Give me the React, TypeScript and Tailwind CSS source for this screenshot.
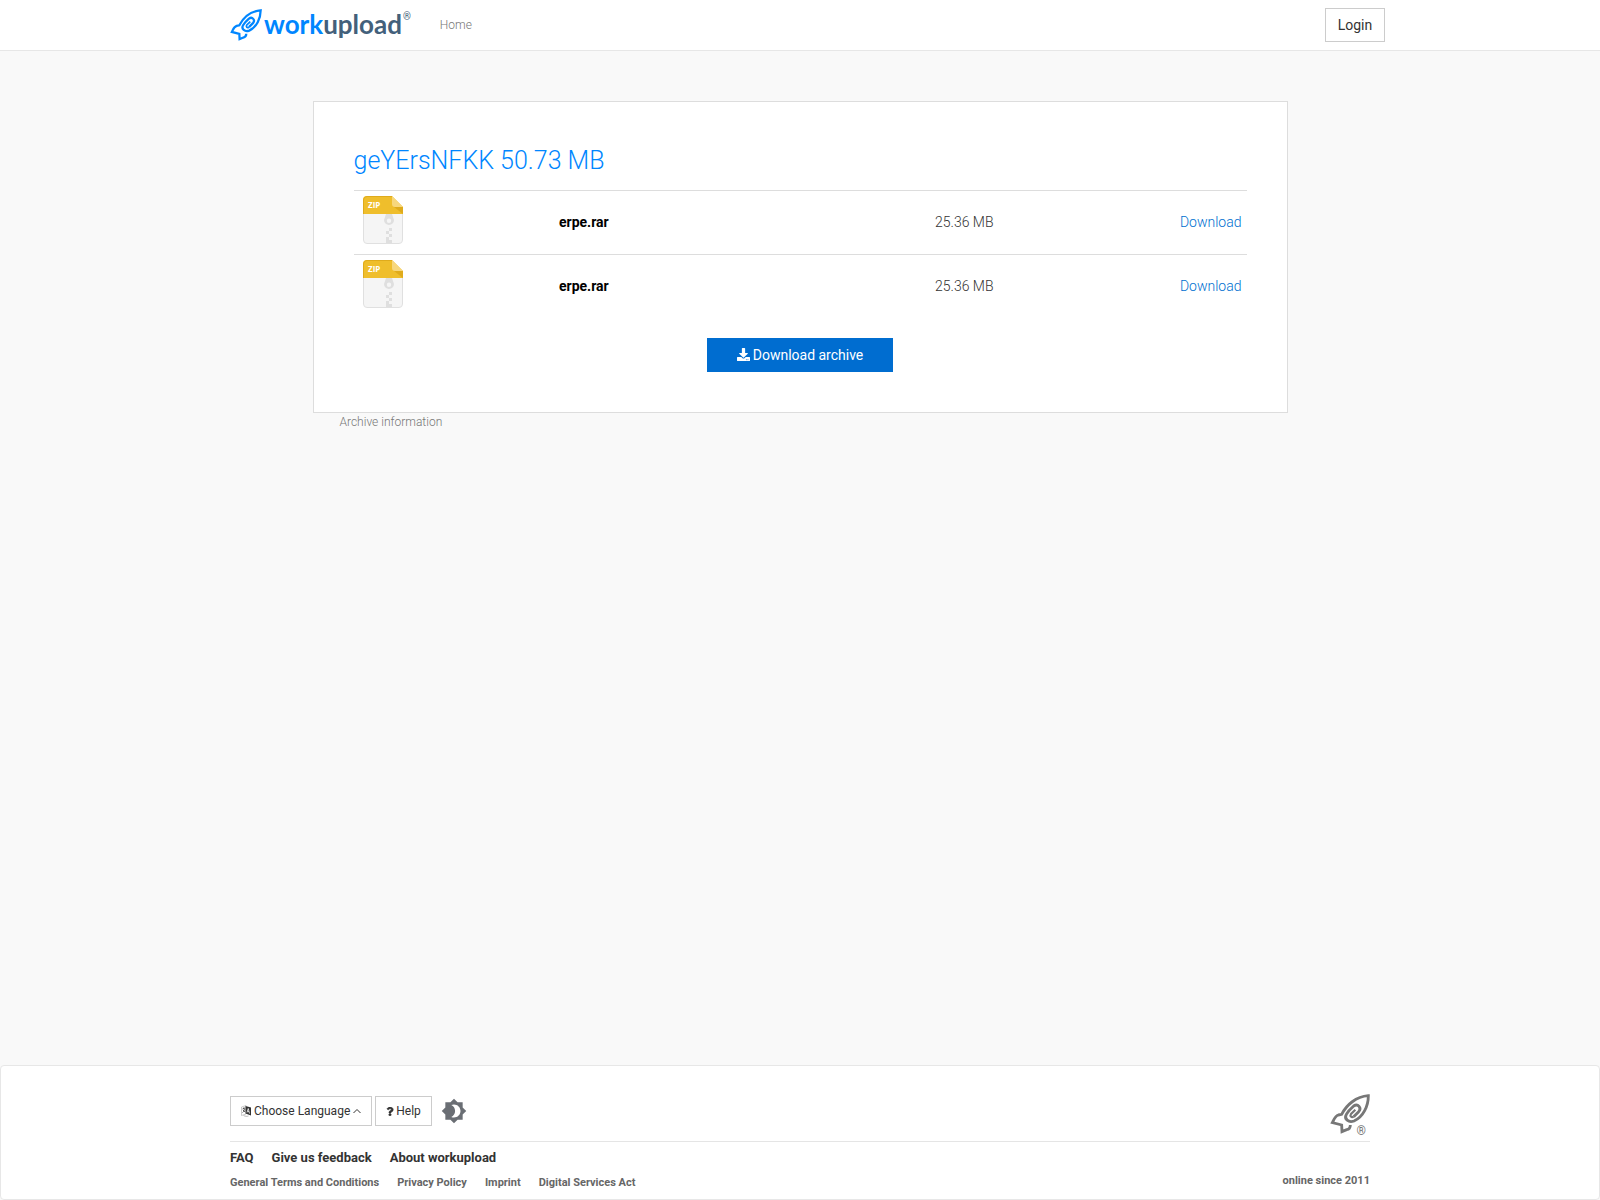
import { FaDownload, FaQuestion } from "react-icons/fa";
import { MdBrightness4 } from "react-icons/md";

const files = [
  { id: 1, name: "erpe.rar", size: "25.36 MB" },
  { id: 2, name: "erpe.rar", size: "25.36 MB" },
];

const mainLinks = ["FAQ", "Give us feedback", "About workupload"];
const legalLinks = ["General Terms and Conditions", "Privacy Policy", "Imprint", "Digital Services Act"];

function Rocket({ className }: { className?: string }) {
  return (
    <svg viewBox="180 100 120 120" className={className} fill="none" stroke="currentColor" strokeWidth="8.500" aria-hidden="true">
      <path d="M241 193 C241 202 237 206 230 207 L216 213 L215 193 L187 186 C192 176 195 166 205 163 L215 161 C230 132 258 108 295 105 C295 136 280 168 252 181 C236 187 221 175 229 161 C234 152 243 143 251 136 C264 127 276 142 266 153 L251 168" />
      <path d="M251 168 C244 172 239 166 243 160 L256 147" strokeWidth="6.500" />
    </svg>
  );
}

function ZipIcon() {
  return (
    <svg viewBox="0 0 40 48" className="block h-12 w-10" role="img" aria-label="ZIP">
      <path d="M.5 17V44a3.500 3.500 0 0 0 3.500 3.500h32a3.500 3.500 0 0 0 3.500-3.500V11H.5z" fill="#f5f5f5" stroke="#e0e0e0" />
      <path d="M0 18V4a4 4 0 0 1 4-4h25l11 11v7z" fill="#efbe2c" />
      <path d="M.5 18V4A3.500 3.500 0 0 1 4 .5h25" fill="none" stroke="#dfab1c" />
      <path d="M31 11h9v7z" fill="#dfab1c" />
      <path d="M29 0l11 11h-8a3 3 0 0 1-3-3z" fill="#f7d77d" />
      <text x="5" y="12" fill="#fff" fontFamily="Open Sans, sans-serif" fontSize="8" fontWeight="700">
        ZIP
      </text>
      <path d="M23 18h6l2 6a5 5 0 1 1-10 0zM26 22.500a2.200 2.200 0 1 0 0 4.400 2.200 2.200 0 0 0 0-4.400z" fill="#dfdfdf" fillRule="evenodd" />
      <path d="M26 32h3v3h-3zM23 35h3v3h-3zM26 38h3v3h-3zM23 41h3v3h-3zM23 44h6v3h-6z" fill="#dfdfdf" />
    </svg>
  );
}

function LanguageIcon() {
  return (
    <svg viewBox="0 0 20 24" className="h-3 w-2.5" aria-hidden="true">
      <path d="M1 4l9-3v17l-9 3z" fill="none" stroke="#999" />
      <path d="M3 8l5-2M5.500 5v3M7 8c-1 4-2 6-4 7M4 10l4 4" fill="none" stroke="#333" strokeWidth="1.500" />
      <path d="M9 2l11 3v16l-11-4z" fill="#333" />
      <path d="M12 15l2.500-8 2.500 10M13 12.500l3 1" fill="none" stroke="#fff" strokeWidth="1.500" />
      <path d="M5 21c4 2 7 2 10 1" fill="none" stroke="#777" />
    </svg>
  );
}

function Header() {
  return (
    <header className="border-b border-[#e7e7e7] bg-white">
      <div className="mx-auto flex h-[50px] max-w-[1170px] items-center pl-[15px]">
        <a href="#" className="flex items-center text-[#0086ff]">
          <Rocket className="h-8 w-8" />
          <span className="pb-0.5 pl-0.5 font-[Lato] text-[26px] leading-8 font-bold">
            work<span className="text-[#43607b]">upload</span>
          </span>
          <span className="self-start pl-px text-[10px] leading-[18px] text-[#43607b]">®</span>
        </a>
        <nav className="pb-0.5 pl-[29px]">
          <a href="#" className="text-xs font-light text-[#777]">
            Home
          </a>
        </nav>
        <button type="button" className="ml-auto h-[34px] w-[60px] border border-[#ccc] bg-white text-sm text-[#333]">
          Login
        </button>
      </div>
    </header>
  );
}

function FileTable() {
  return (
    <table className="w-full table-fixed">
      <colgroup>
        <col className="w-[22%]" />
        <col className="w-[42%]" />
        <col className="w-[18%]" />
        <col className="w-[18%]" />
      </colgroup>
      <tbody>
        {files.map((file) => (
          <tr key={file.id} className="h-16 border-t border-[#ddd]">
            <td className="px-[9px] pt-[5px] align-top">
              <ZipIcon />
            </td>
            <td className="px-[9px] pb-0.5 font-bold text-black">{file.name}</td>
            <td className="px-[10px] pb-0.5 font-light">{file.size}</td>
            <td className="px-[5px] pb-0.5 text-right font-light">
              <a href="#" className="text-[#0070d0]">
                Download
              </a>
            </td>
          </tr>
        ))}
      </tbody>
    </table>
  );
}

function Footer() {
  return (
    <footer className="rounded border border-[#e7e7e7] bg-white">
      <div className="mx-auto max-w-[1140px] pt-7 pb-2">
        <div className="flex items-center justify-between border-b border-[#e5e5e5] pb-[7px]">
          <div className="flex items-center gap-[3px] pb-1.5 text-xs text-[#333]">
            <button type="button" className="flex h-[30px] items-center gap-[3px] border border-[#ccc] px-2.5">
              <LanguageIcon />
              Choose Language
              <svg viewBox="0 0 8 8" className="h-2 w-2" fill="none" stroke="currentColor" aria-hidden="true">
                <path d="M.5 6L4 2.500 7.500 6" />
              </svg>
            </button>
            <button type="button" className="flex h-[30px] items-center gap-0.5 border border-[#ccc] px-2.5">
              <FaQuestion className="h-[9px] w-2 stroke-current stroke-[30]" />
              Help
            </button>
            <button type="button" aria-label="Dark mode" className="ml-1.5 text-[#6a6e74]">
              <MdBrightness4 className="h-[26px] w-[26px]" />
            </button>
          </div>
          <div className="relative text-[#777]">
            <Rocket className="h-10 w-10" />
            <span className="absolute right-1 -bottom-px text-xs leading-2">®</span>
          </div>
        </div>
        <div className="flex items-end justify-between pt-2 font-bold">
          <div>
            <ul className="flex gap-[18px] text-[13px] leading-4 text-[#333]">
              {mainLinks.map((link) => (
                <li key={link}>
                  <a href="#">{link}</a>
                </li>
              ))}
            </ul>
            <ul className="flex gap-[18px] pt-[9px] text-[11px] leading-4 text-[#666]">
              {legalLinks.map((link) => (
                <li key={link}>
                  <a href="#">{link}</a>
                </li>
              ))}
            </ul>
          </div>
          <p className="pb-0.5 text-[11px] leading-4 text-[#666]">online since 2011</p>
        </div>
      </div>
    </footer>
  );
}

export default function App() {
  return (
    <div className="flex min-h-screen flex-col bg-[#f9f9f9] font-[Roboto,sans-serif] text-sm text-[#333]">
      <Header />
      <main className="mx-auto w-full max-w-[975px] flex-1 pt-[50px]">
        <section className="border border-[#ddd] bg-white p-10">
          <h1 className="pb-2.5 text-[25px] leading-[38px] font-light text-[#0086ff]">geYErsNFKK 50.73 MB</h1>
          <FileTable />
          <div className="flex justify-center pt-[19px]">
            <button type="button" className="flex h-[34px] items-center gap-[3px] bg-[#006dd0] px-[30px] text-white">
              <FaDownload className="h-[13px] w-[13px]" />
              Download archive
            </button>
          </div>
        </section>
        <a href="#" className="ml-[27px] block pt-px text-xs leading-4 font-light text-[#777]">
          Archive information
        </a>
      </main>
      <Footer />
    </div>
  );
}
